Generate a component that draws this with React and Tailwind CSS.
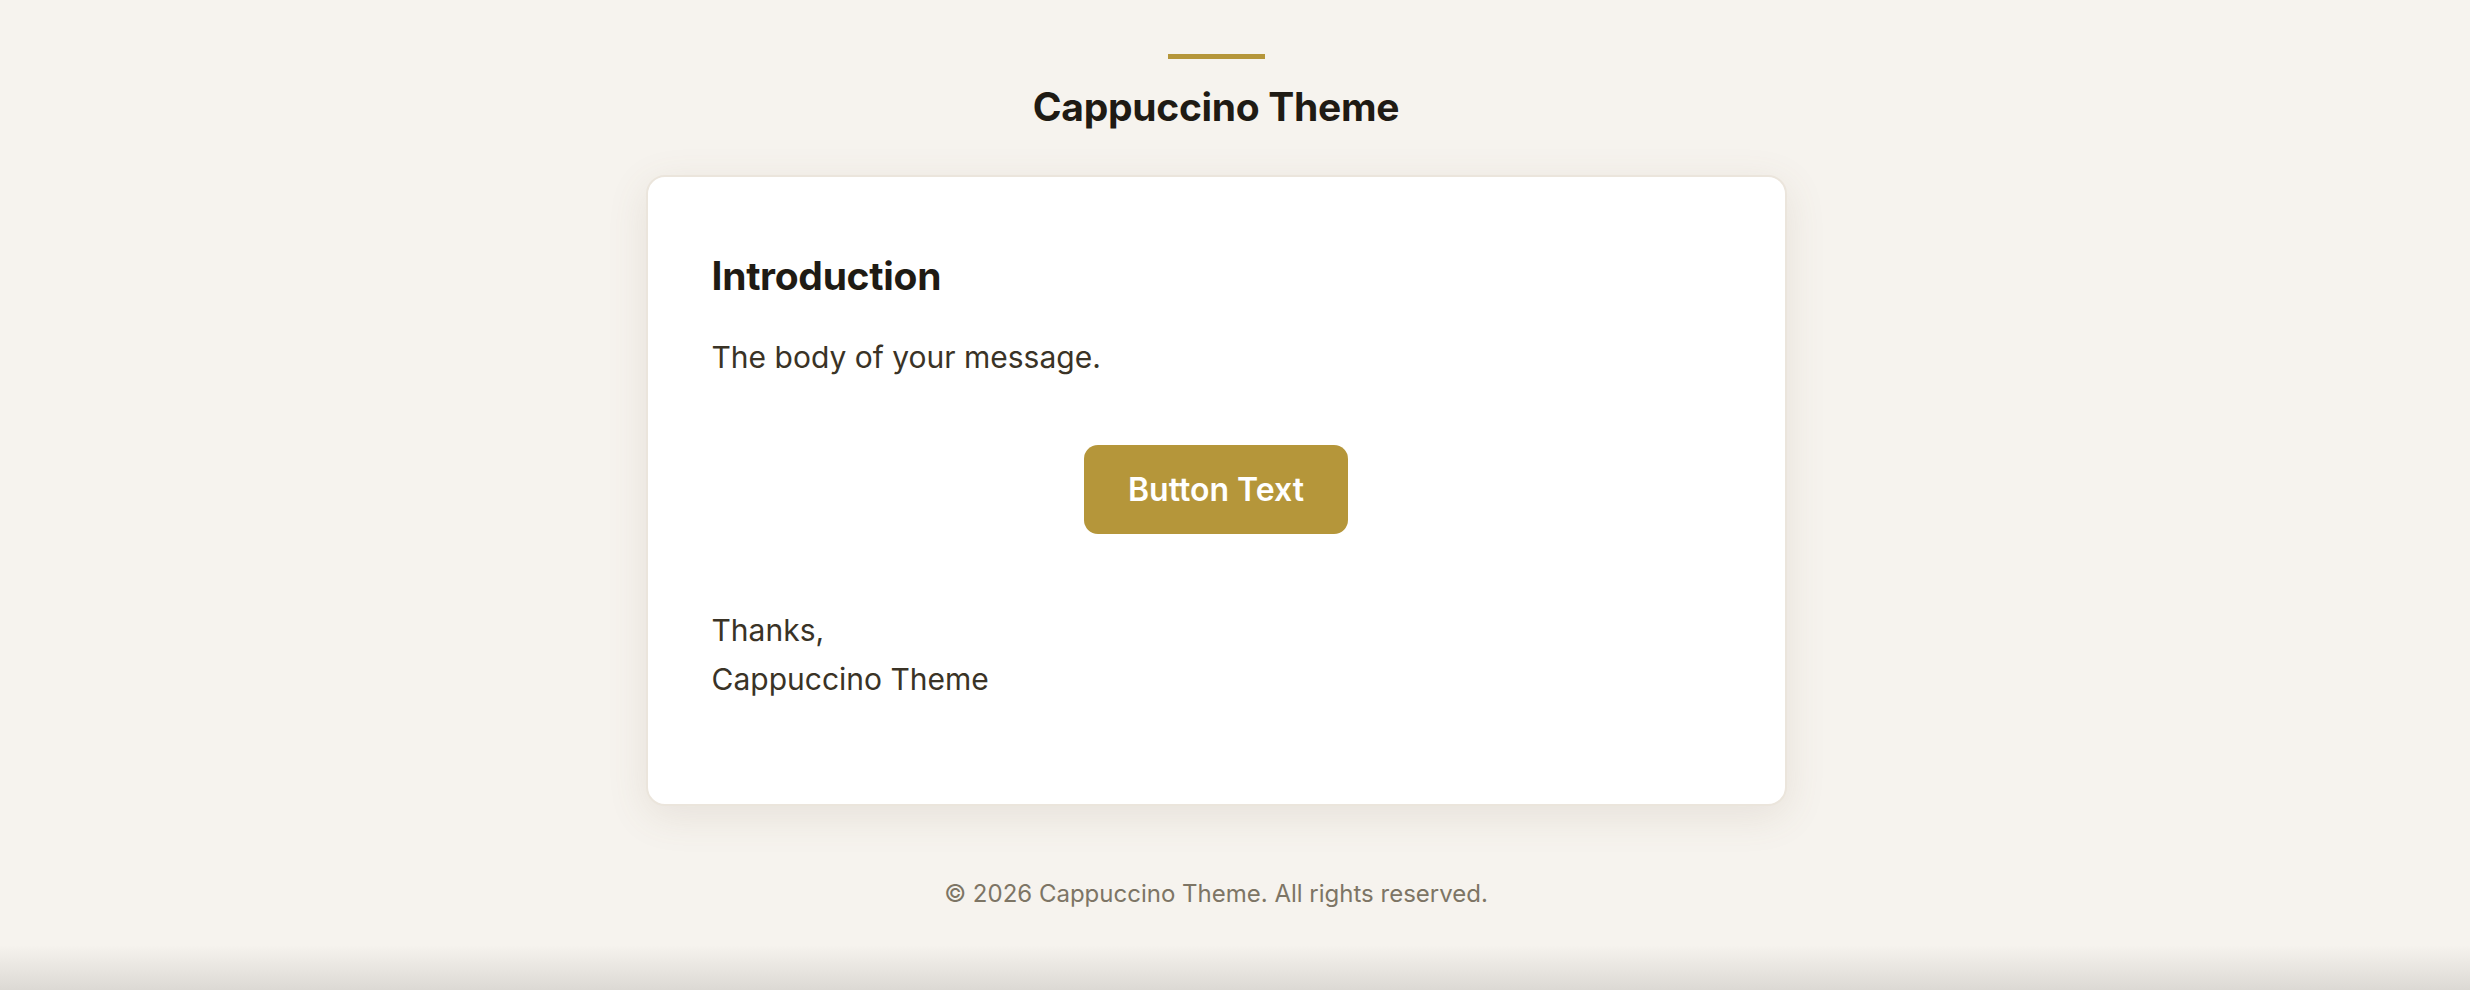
export default function App() {
  return (
    <div className="w-full h-[990px] bg-[#f6f3ee] relative overflow-hidden flex flex-col items-center pr-[38px]" style={{ fontFamily: "Inter, 'Noto Sans', sans-serif" }}>
      <div className="mt-[54px] w-[97px] h-[5px] bg-[#b5963a]" />
      <h1 className="mt-[24px] text-[39px] leading-[48px] font-bold text-[#1f1b14] tracking-[-0.3px]">Cappuccino Theme</h1>
      <div className="mt-[44px] w-[1141px] h-[631px] bg-white rounded-[19px] border-2 border-[#ebe5dc] shadow-[0_10px_40px_rgba(120,100,70,0.12)] px-[64px] pt-[76px]">
        <h2 className="text-[39px] leading-[46px] font-bold text-[#1f1b14] tracking-[-0.3px]">Introduction</h2>
        <p className="mt-[36px] text-[30px] leading-[44px] text-[#3a3326]">The body of your message.</p>
        <div className="mt-[66px] flex justify-center">
          <div className="w-[264px] h-[89px] rounded-[14px] bg-[#b5963a] flex items-center justify-center text-white text-[32px] font-semibold">Button Text</div>
        </div>
        <div className="mt-[72px] text-[30px] leading-[49px] text-[#3a3326]">
          <div>Thanks,</div>
          <div>Cappuccino Theme</div>
        </div>
      </div>
      <p className="mt-[70px] text-[24px] text-[#7d7565]">© 2026 Cappuccino Theme. All rights reserved.</p>
      <div className="absolute left-0 right-0 bottom-0 h-[45px] bg-gradient-to-b from-[#f6f3ee] to-[#dcd9d4]" />
    </div>
  );
}
